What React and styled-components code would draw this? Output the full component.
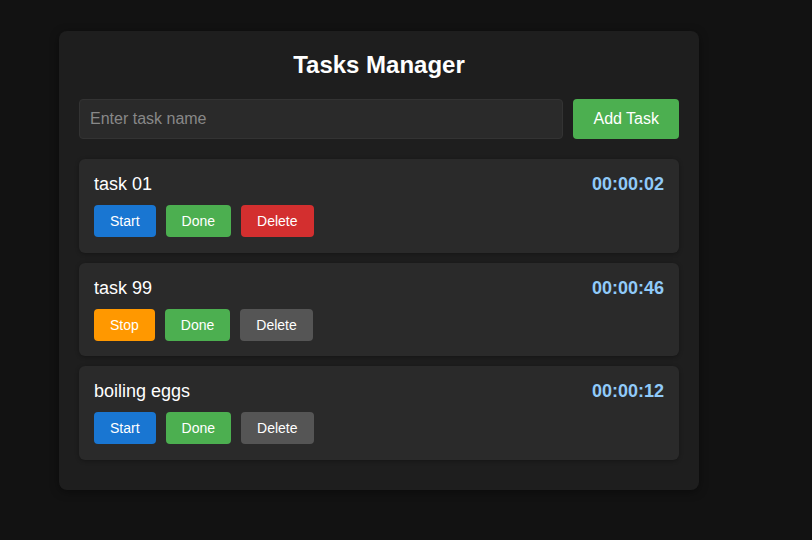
import React, { useState } from 'react'
import styled, { createGlobalStyle } from 'styled-components'

const GlobalStyle = createGlobalStyle`
	body {
		margin: 0;
		background: #121212;
		color: #fff;
		font-family: 'Liberation Sans', Arial, sans-serif;
	}
`

const initialTasks = [
	{ id: 1, name: 'task 01', time: '00:00:02', running: false, deleteActive: true },
	{ id: 2, name: 'task 99', time: '00:00:46', running: true, deleteActive: false },
	{ id: 3, name: 'boiling eggs', time: '00:00:12', running: false, deleteActive: false },
]

const App = () => {
	const [tasks] = useState(initialTasks)
	const [name, setName] = useState('')

	return (
		<Page>
			<GlobalStyle />
			<Container>
				<Title>Tasks Manager</Title>
				<InputRow>
					<TaskInput
						placeholder="Enter task name"
						value={name}
						onChange={(e) => setName(e.target.value)}
					/>
					<AddButton type="button">Add Task</AddButton>
				</InputRow>
				{tasks.map((task) => (
					<TaskCard key={task.id}>
						<TaskHeader>
							<TaskName>{task.name}</TaskName>
							<TaskTime>{task.time}</TaskTime>
						</TaskHeader>
						<Actions>
							<ActionButton $color={task.running ? '#ff9800' : '#1976d2'}>
								{task.running ? 'Stop' : 'Start'}
							</ActionButton>
							<ActionButton $color="#4caf50">Done</ActionButton>
							<ActionButton $color={task.deleteActive ? '#d32f2f' : '#555555'}>
								Delete
							</ActionButton>
						</Actions>
					</TaskCard>
				))}
			</Container>
		</Page>
	)
}

const Page = styled.div`
	padding: 31px 0 0 59px;
	min-height: 100vh;
	box-sizing: border-box;
`

const Container = styled.div`
	width: 640px;
	box-sizing: border-box;
	padding: 20px;
	background: #1e1e1e;
	border-radius: 8px;
	box-shadow: 0 2px 10px rgba(0, 0, 0, 0.4);
`

const Title = styled.h2`
	margin: 0 0 20px;
	font-size: 24px;
	line-height: 28px;
	font-weight: bold;
	text-align: center;
	color: #fff;
`

const InputRow = styled.div`
	display: flex;
	gap: 10px;
	margin-bottom: 20px;
`

const TaskInput = styled.input`
	flex: 1;
	height: 40px;
	box-sizing: border-box;
	padding: 0 10px;
	background: #2a2a2a;
	border: 1px solid #333;
	border-radius: 4px;
	color: #fff;
	font-family: inherit;
	font-size: 16px;
	outline: none;
	&::placeholder {
		color: #888;
	}
`

const AddButton = styled.button`
	height: 40px;
	padding: 0 20px;
	background: #4caf50;
	color: #fff;
	border: none;
	border-radius: 4px;
	font-family: inherit;
	font-size: 16px;
	cursor: pointer;
`

const TaskCard = styled.div`
	background: #2a2a2a;
	border-radius: 6px;
	padding: 15px 15px 15.5px;
	margin-bottom: 10px;
	box-shadow: 0 1px 4px rgba(0, 0, 0, 0.3);
`

const TaskHeader = styled.div`
	display: flex;
	justify-content: space-between;
	align-items: center;
	height: 21px;
	margin-bottom: 10px;
`

const TaskName = styled.span`
	font-size: 18px;
	color: #fff;
`

const TaskTime = styled.span`
	font-size: 18px;
	font-weight: bold;
	color: #90caf9;
`

const Actions = styled.div`
	display: flex;
	gap: 10px;
`

const ActionButton = styled.button`
	height: 32px;
	padding: 0 16px;
	background: ${(p) => p.$color};
	color: #fff;
	border: none;
	border-radius: 4px;
	font-family: inherit;
	font-size: 14px;
	cursor: pointer;
`

export default App
